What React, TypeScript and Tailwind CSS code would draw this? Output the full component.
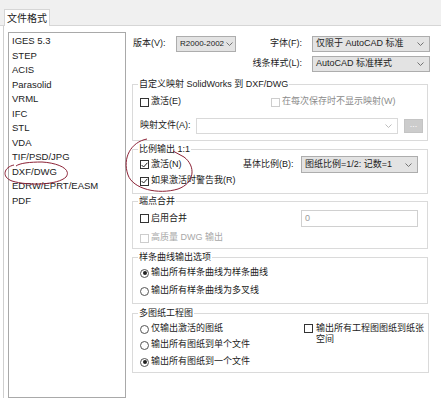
import type { ReactNode } from "react";

const formats = [
  "IGES 5.3",
  "STEP",
  "ACIS",
  "Parasolid",
  "VRML",
  "IFC",
  "STL",
  "VDA",
  "TIF/PSD/JPG",
  "DXF/DWG",
  "EDRW/EPRT/EASM",
  "PDF",
];

function Chevron({ light }: { light?: boolean }) {
  return (
    <svg width="7" height="4" viewBox="0 0 7 4" className="shrink-0">
      <path d="M0.5 0.5 L3.5 3.5 L6.5 0.5" fill="none" stroke={light ? "#b5b5b5" : "#666"} strokeWidth="0.9" />
    </svg>
  );
}

function Select({ value, w, h = "h-[16px]", tight }: { value: string; w: string; h?: string; tight?: boolean }) {
  return (
    <div
      className={`${w} ${h} flex items-center border border-[#adadad] bg-[#e3e3e3] ${
        tight ? "pl-[3px] pr-[3px] text-[8px]" : "pl-[3px] pr-[5px]"
      }`}
    >
      <span className="whitespace-nowrap">{value}</span>
      <span className="ml-auto pl-[2px] flex items-center">
        <Chevron />
      </span>
    </div>
  );
}

function Check({ checked, disabled }: { checked?: boolean; disabled?: boolean }) {
  return (
    <span
      className={`inline-flex w-[9px] h-[9px] shrink-0 items-center justify-center border bg-white ${
        disabled ? "border-[#cdcdcd]" : "border-[#333]"
      }`}
    >
      {checked && (
        <svg width="7" height="6" viewBox="0 0 7 6">
          <path d="M0.6 3 L2.6 5 L6.4 0.8" fill="none" stroke="#222" strokeWidth="1" />
        </svg>
      )}
    </span>
  );
}

function Radio({ on }: { on?: boolean }) {
  return (
    <span className="inline-flex w-[9px] h-[9px] shrink-0 items-center justify-center rounded-full border border-[#555] bg-white">
      {on && <span className="w-[4px] h-[4px] rounded-full bg-[#222]" />}
    </span>
  );
}

function Group({ title, className = "", children }: { title: string; className?: string; children: ReactNode }) {
  return (
    <fieldset className={`w-[296px] border border-[#dadada] pl-[7px] pr-[4px] ${className}`}>
      <legend className="-ml-[2px] px-[1px] leading-[14px]">{title}</legend>
      {children}
    </fieldset>
  );
}

export default function App() {
  return (
    <div className="relative w-[441px] h-[398px] overflow-hidden bg-white text-[9px] text-[#222] font-['Liberation_Sans','Noto_Sans_CJK_SC',sans-serif]">
      {/* tab strip */}
      <div className="h-[26px] bg-[#f0f0f0] border-b border-[#d6d6d6] pl-[4px] pt-[9px]">
        <div className="w-[46px] h-[17px] bg-white border border-b-0 border-[#d6d6d6] flex items-center justify-center text-[10px]">
          文件格式
        </div>
      </div>

      <div className="flex h-[372px] ml-[3px] border-l border-[#cfcfcf] pl-[4px] pt-[6px]">
        {/* format list */}
        <div className="w-[118px] border border-[#a9a9a9] pl-[3px] pt-[1px] leading-[14.5px] text-[9.5px]">
          {formats.map((f) => (
            <div key={f}>{f}</div>
          ))}
        </div>

        {/* options */}
        <div className="ml-[6px] pt-[4px]">
          <div className="grid grid-cols-[44px_60px_76px_118px] grid-rows-[16px_16px] gap-y-[4px] items-center">
            <span className="pl-[1px]">版本(V):</span>
            <Select value="R2000-2002" w="w-[60px]" tight />
            <span className="text-right pr-[10px]">字体(F):</span>
            <Select value="仅限于 AutoCAD 标准" w="w-[118px]" />
            <span className="col-span-3 text-right pr-[10px]">线条样式(L):</span>
            <Select value="AutoCAD 标准样式" w="w-[118px]" />
          </div>

          <Group title="自定义映射 SolidWorks 到 DXF/DWG" className="mt-[5px] pb-[6px]">
            <div className="mt-[3px] h-[16px] flex items-center">
              <div className="w-[131px] flex items-center gap-[2px]">
                <Check />
                <span>激活(E)</span>
              </div>
              <div className="flex items-center gap-[2px] text-[#8c8c8c]">
                <Check disabled />
                <span>在每次保存时不显示映射(W)</span>
              </div>
            </div>
            <div className="mt-[8px] h-[16px] flex items-center">
              <span className="w-[56px]">映射文件(A):</span>
              <div className="w-[202px] h-[16px] border border-[#d9d9d9] bg-white flex items-center justify-end pr-[5px]">
                <Chevron light />
              </div>
              <div className="ml-[6px] w-[19px] h-[14px] bg-[#cccccc] border border-[#c4c4c4] flex items-center justify-center text-white leading-none pb-[3px]">
                ...
              </div>
            </div>
          </Group>

          <Group title="比例输出 1:1" className="mt-[1px] pb-[4px]">
            <div className="h-[17px] flex items-center">
              <div className="w-[103px] flex items-center gap-[2px]">
                <Check checked />
                <span>激活(N)</span>
              </div>
              <span className="w-[58px]">基体比例(B):</span>
              <Select value="图纸比例=1/2: 记数=1" w="w-[117px]" h="h-[17px]" />
            </div>
            <div className="h-[16px] flex items-center gap-[2px]">
              <Check checked />
              <span>如果激活时警告我(R)</span>
            </div>
          </Group>

          <Group title="端点合并" className="pb-[2px]">
            <div className="mt-[2px] h-[17px] flex items-center">
              <div className="w-[161px] flex items-center gap-[2px]">
                <Check />
                <span>启用合并</span>
              </div>
              <div className="w-[117px] h-[17px] border border-[#d0d0d0] bg-white flex items-center pl-[3px] text-[#9a9a9a]">
                0
              </div>
            </div>
            <div className="mt-[3px] h-[16px] flex items-center gap-[2px] text-[#a8a8a8]">
              <Check disabled />
              <span>高质量 DWG 输出</span>
            </div>
          </Group>

          <Group title="样条曲线输出选项" className="mt-[1px] pb-[4px]">
            <div className="mt-[1px] h-[16px] flex items-center gap-[2px]">
              <Radio on />
              <span>输出所有样条曲线为样条曲线</span>
            </div>
            <div className="mt-[2px] h-[16px] flex items-center gap-[2px]">
              <Radio />
              <span>输出所有样条曲线为多叉线</span>
            </div>
          </Group>

          <Group title="多图纸工程图" className="mt-[2px] pb-[2px]">
            <div className="flex">
              <div className="w-[164px] flex flex-col">
                <div className="mt-[1px] h-[16px] flex items-center gap-[2px]">
                  <Radio />
                  <span>仅输出激活的图纸</span>
                </div>
                <div className="h-[16px] flex items-center gap-[2px]">
                  <Radio />
                  <span>输出所有图纸到单个文件</span>
                </div>
                <div className="mt-[1px] h-[16px] flex items-center gap-[2px]">
                  <Radio on />
                  <span>输出所有图纸到一个文件</span>
                </div>
              </div>
              <div className="mt-[3px] flex items-start gap-[3px]">
                <span className="mt-[1px]">
                  <Check />
                </span>
                <span className="w-[108px] leading-[11px]">输出所有工程图图纸到纸张空间</span>
              </div>
            </div>
          </Group>
        </div>
      </div>

      {/* hand-drawn red annotations */}
      <svg className="absolute inset-0 pointer-events-none" width="441" height="398" viewBox="0 0 441 398">
        <path
          d="M14 165 C4 167 1 177 12 181 C28 186 58 185 66 177 C72 169 58 163 42 162 C30 162 20 163 16 166"
          fill="none"
          stroke="#8c2236"
          strokeWidth="1"
        />
        <path
          d="M147 139 C131 142 122 158 128 175 C133 189 158 195 178 189 C195 183 196 166 184 157 L173 151"
          fill="none"
          stroke="#8c2236"
          strokeWidth="1"
        />
      </svg>
    </div>
  );
}
